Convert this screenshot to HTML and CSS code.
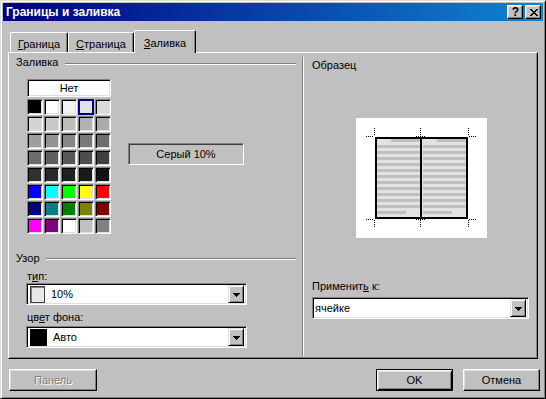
FILE: index.html
```html
<!DOCTYPE html>
<html lang="ru">
<head>
<meta charset="utf-8">
<title>Границы и заливка</title>
<link rel="stylesheet" href="styles.css">
</head>
<body>
<div class="window">
  <div class="titlebar">
    <span class="title">Границы и заливка</span>
    <div class="tb-buttons">
      <span class="tb-btn help">?</span>
      <span class="tb-btn close">
        <svg width="8" height="7" viewBox="0 0 8 7" shape-rendering="crispEdges">
          <path d="M0 0h2v1h-2zM6 0h2v1h-2zM1 1h2v1h-2zM5 1h2v1h-2zM2 2h4v1h-4zM3 3h2v1h-2zM2 4h4v1h-4zM1 5h2v1h-2zM5 5h2v1h-2zM0 6h2v1h-2zM6 6h2v1h-2z" fill="#000"/>
        </svg>
      </span>
    </div>
  </div>

  <div class="tabs">
    <div class="tab tab-1"><u>Г</u>раница</div>
    <div class="tab tab-2"><u>С</u>траница</div>
    <div class="tab tab-3 active"><u>З</u>аливка</div>
  </div>

  <div class="panel">
    <div class="col-left">
      <div class="group-head"><span>Заливка</span><span class="rule"></span></div>
      <div class="fill-row">
        <div class="palette">
          <div class="none-box">Нет</div>
          <div class="grid">
            <span class="cell" style="background:#000000"></span>
            <span class="cell" style="background:#ffffff"></span>
            <span class="cell" style="background:#f2f2f2"></span>
            <span class="cell selected" style="background:#e2e2e2"></span>
            <span class="cell" style="background:#dadada"></span>

            <span class="cell" style="background:#d2d6d2"></span>
            <span class="cell" style="background:#c8c8c8"></span>
            <span class="cell" style="background:#bdbdbd"></span>
            <span class="cell" style="background:#b2b2b2"></span>
            <span class="cell" style="background:#a8aca8"></span>

            <span class="cell" style="background:#9e9e9e"></span>
            <span class="cell" style="background:#909490"></span>
            <span class="cell" style="background:#868686"></span>
            <span class="cell" style="background:#7a7a7a"></span>
            <span class="cell" style="background:#6e6e6e"></span>

            <span class="cell" style="background:#6a6e6a"></span>
            <span class="cell" style="background:#5e5e5e"></span>
            <span class="cell" style="background:#565a56"></span>
            <span class="cell" style="background:#4c4e4c"></span>
            <span class="cell" style="background:#3e3e3e"></span>

            <span class="cell" style="background:#303030"></span>
            <span class="cell" style="background:#282a28"></span>
            <span class="cell" style="background:#202020"></span>
            <span class="cell" style="background:#181c18"></span>
            <span class="cell" style="background:#141018"></span>

            <span class="cell" style="background:#0000ff"></span>
            <span class="cell" style="background:#00ffff"></span>
            <span class="cell" style="background:#00ff00"></span>
            <span class="cell" style="background:#ffff00"></span>
            <span class="cell" style="background:#ff0000"></span>

            <span class="cell" style="background:#000080"></span>
            <span class="cell" style="background:#008080"></span>
            <span class="cell" style="background:#008000"></span>
            <span class="cell" style="background:#808000"></span>
            <span class="cell" style="background:#800000"></span>

            <span class="cell" style="background:#ff00ff"></span>
            <span class="cell" style="background:#800080"></span>
            <span class="cell" style="background:#ffffff"></span>
            <span class="cell" style="background:#c0c0c0"></span>
            <span class="cell" style="background:#808080"></span>
          </div>
        </div>
        <div class="fill-name">Серый 10%</div>
      </div>

      <div class="group-head pattern-head"><span>Узор</span><span class="rule"></span></div>
      <div class="label label-type">т<u>и</u>п:</div>
      <div class="combo combo-left">
        <span class="swatch swatch-light"></span>
        <span class="combo-text">10%</span>
        <span class="drop"><svg width="7" height="4" viewBox="0 0 7 4" shape-rendering="crispEdges"><path d="M0 0h7v1h-1v1h-1v1h-1v1h-1v-1h-1v-1h-1v-1h-1z" fill="#000"/></svg></span>
      </div>
      <div class="label label-bg">цв<u>е</u>т фона:</div>
      <div class="combo combo-left combo-bg">
        <span class="swatch swatch-black"></span>
        <span class="combo-text">Авто</span>
        <span class="drop"><svg width="7" height="4" viewBox="0 0 7 4" shape-rendering="crispEdges"><path d="M0 0h7v1h-1v1h-1v1h-1v1h-1v-1h-1v-1h-1v-1h-1z" fill="#000"/></svg></span>
      </div>
    </div>

    <div class="divider"></div>

    <div class="col-right">
      <div class="label sample-label">Образец</div>
      <div class="sample">
        <svg width="131" height="120" viewBox="0 0 131 120" shape-rendering="crispEdges">
          <rect x="0" y="0" width="131" height="120" fill="#fff"/>
          <rect x="19" y="19" width="93" height="82" fill="#e2e2e2"/>
          <g fill="#c0c0c0">
            <rect x="35" y="21" width="29" height="3"/>
            <rect x="21" y="27" width="43" height="3"/>
            <rect x="21" y="33" width="43" height="3"/>
            <rect x="21" y="39" width="43" height="3"/>
            <rect x="21" y="45" width="43" height="3"/>
            <rect x="21" y="51" width="43" height="3"/>
            <rect x="21" y="57" width="43" height="3"/>
            <rect x="21" y="63" width="43" height="3"/>
            <rect x="21" y="69" width="43" height="3"/>
            <rect x="21" y="75" width="43" height="3"/>
            <rect x="21" y="81" width="43" height="3"/>
            <rect x="21" y="87" width="43" height="3"/>
            <rect x="21" y="93" width="29" height="3"/>

            <rect x="81" y="21" width="29" height="3"/>
            <rect x="67" y="27" width="43" height="3"/>
            <rect x="67" y="33" width="43" height="3"/>
            <rect x="67" y="39" width="43" height="3"/>
            <rect x="67" y="45" width="43" height="3"/>
            <rect x="67" y="51" width="43" height="3"/>
            <rect x="67" y="57" width="43" height="3"/>
            <rect x="67" y="63" width="43" height="3"/>
            <rect x="67" y="69" width="43" height="3"/>
            <rect x="67" y="75" width="43" height="3"/>
            <rect x="67" y="81" width="43" height="3"/>
            <rect x="67" y="87" width="43" height="3"/>
            <rect x="67" y="93" width="29" height="3"/>
          </g>
          <g fill="#000">
            <rect x="19" y="19" width="93" height="2"/>
            <rect x="19" y="99" width="93" height="2"/>
            <rect x="19" y="19" width="2" height="82"/>
            <rect x="110" y="19" width="2" height="82"/>
            <rect x="64" y="19" width="2" height="82"/>
          </g>
          <g stroke="#000" stroke-width="1" stroke-dasharray="1 1" fill="none">
            <path d="M18.5 10V18M10 18.5H18"/>
            <path d="M64.5 10V18M60 18.5H69"/>
            <path d="M112.5 10V18M113 18.5H121"/>
            <path d="M18.5 102V110M10 101.5H18"/>
            <path d="M64.5 102V110M60 101.5H69"/>
            <path d="M112.5 102V110M113 101.5H121"/>
          </g>
        </svg>
      </div>
      <div class="label apply-label">Применит<u>ь</u> к:</div>
      <div class="combo combo-right">
        <span class="combo-text plain">ячейке</span>
        <span class="drop"><svg width="7" height="4" viewBox="0 0 7 4" shape-rendering="crispEdges"><path d="M0 0h7v1h-1v1h-1v1h-1v1h-1v-1h-1v-1h-1v-1h-1z" fill="#000"/></svg></span>
      </div>
    </div>
  </div>

  <div class="buttons">
    <div class="btn btn-panel disabled">Панель</div>
    <div class="spacer"></div>
    <div class="btn btn-ok default">OK</div>
    <div class="btn btn-cancel">Отмена</div>
  </div>
</div>
</body>
</html>
```

FILE: styles.css
```css
* { box-sizing: border-box; }

html, body {
  margin: 0;
  padding: 0;
  background: #c0c0c0;
}

body {
  font-family: "Liberation Sans", Arial, sans-serif;
  font-size: 11px;
  line-height: 13px;
  color: #000;
}

u { text-decoration: underline; text-underline-offset: 1px; }

.window {
  width: 546px;
  height: 399px;
  background: #c0c0c0;
  border: 1px solid;
  border-color: #dfdfdf #000 #000 #dfdfdf;
  box-shadow: inset 1px 1px #fff, inset -1px -1px #808080;
  padding: 2px;
  display: flex;
  flex-direction: column;
}

/* Title bar */
.titlebar {
  height: 18px;
  flex: none;
  background: linear-gradient(to right, #000080, #1084d0);
  display: flex;
  align-items: center;
  justify-content: space-between;
  padding: 0 2px 0 3px;
}

.title {
  color: #fff;
  font-weight: bold;
  font-size: 12px;
  line-height: 14px;
}

.tb-buttons {
  display: flex;
  gap: 2px;
}

.tb-btn {
  width: 16px;
  height: 14px;
  background: #c0c0c0;
  border: 1px solid;
  border-color: #fff #000 #000 #fff;
  box-shadow: inset -1px -1px #808080, inset 1px 1px #dfdfdf;
  display: flex;
  align-items: center;
  justify-content: center;
}

.help {
  font-weight: bold;
  font-size: 12px;
  line-height: 12px;
  padding-left: 1px;
}

.close svg { display: block; margin-left: 1px; }

/* Tabs */
.tabs {
  height: 22px;
  margin-top: 9px;
  padding-left: 7px;
  display: flex;
  align-items: flex-end;
  flex: none;
}

.tab {
  height: 20px;
  background: #c0c0c0;
  border-top: 1px solid #fff;
  border-left: 1px solid #fff;
  border-right: 1px solid #000;
  border-radius: 2px 2px 0 0;
  box-shadow: inset -1px 0 #808080;
  text-align: center;
  padding-top: 5px;
}

.tab-1 { width: 58px; }
.tab-2 { width: 66px; }
.tab-3 { width: 62px; }

.tab.active {
  height: 23px;
  margin-bottom: -1px;
  padding-top: 6px;
  position: relative;
  z-index: 1;
}

/* Panel */
.panel {
  width: 530px;
  height: 307px;
  margin-left: 5px;
  flex: none;
  border-top: 1px solid #fff;
  border-left: 1px solid #fff;
  border-right: 1px solid #000;
  border-bottom: 1px solid #000;
  box-shadow: inset -1px -1px #808080;
  display: flex;
}

.col-left {
  width: 293px;
  flex: none;
  padding: 3px 6px 0 7px;
  display: flex;
  flex-direction: column;
}

.group-head {
  display: flex;
  align-items: center;
  height: 13px;
}

.rule {
  flex: 1;
  height: 2px;
  border-top: 1px solid #808080;
  border-bottom: 1px solid #fff;
  margin-left: 7px;
  margin-top: 3px;
}

.pattern-head { margin-top: 18px; }
.pattern-head .rule { margin-left: 6px; margin-top: 0; }

.fill-row {
  display: flex;
  margin: 10px 0 0 11px;
}

.palette {
  width: 84px;
  display: flex;
  flex-direction: column;
}

.none-box {
  height: 18px;
  background: #fff;
  border: 1px solid;
  border-color: #808080 #fff #fff #808080;
  box-shadow: inset 1px 1px #000, inset -1px -1px #dfdfdf;
  text-align: center;
  line-height: 16px;
}

.grid {
  margin-top: 2px;
  display: grid;
  grid-template-columns: repeat(5, 16px);
  grid-auto-rows: 16px;
  gap: 1px;
}

.cell {
  display: block;
  border: 1px solid;
  border-color: #808080 #fff #fff #808080;
  box-shadow: inset 1px 1px #000, inset -1px -1px #dfdfdf;
}

.cell.selected {
  border: 2px solid #000080;
  box-shadow: none;
}

.fill-name {
  width: 116px;
  height: 22px;
  margin: 64px 0 0 17px;
  border: 1px solid;
  border-color: #808080 #fff #fff #808080;
  box-shadow: inset 1px 1px #404040;
  text-align: center;
  line-height: 20px;
}

.label { height: 13px; }

.label-type { margin: 5px 0 0 11px; }
.label-bg { margin: 6px 0 0 11px; }

.combo {
  height: 22px;
  background: #fff;
  border: 1px solid;
  border-color: #808080 #fff #fff #808080;
  box-shadow: inset 1px 1px #000, inset -1px -1px #dfdfdf;
  display: flex;
  align-items: center;
  padding: 2px;
}

.combo-left {
  width: 221px;
  margin-left: 10px;
}

.combo-bg { margin-top: 2px; }

.swatch {
  width: 16px;
  height: 17px;
  margin-left: 1px;
  flex: none;
}

.swatch-light {
  width: 15px;
  background: #e8e8e8;
  border: 1px solid #404040;
  box-shadow: inset 1px 1px #808080;
}

.swatch-black {
  width: 17px;
  background: #000;
}

.combo-text {
  margin-left: 6px;
  flex: 1;
}

.combo-text.plain { margin-left: 0; }

.drop {
  width: 16px;
  height: 18px;
  flex: none;
  background: #c0c0c0;
  border: 1px solid;
  border-color: #dfdfdf #000 #000 #dfdfdf;
  box-shadow: inset 1px 1px #fff, inset -1px -1px #808080;
  display: flex;
  align-items: center;
  justify-content: center;
}

.drop svg { display: block; margin-top: 1px; }

.divider {
  width: 2px;
  flex: none;
  margin: 4px 0 2px 0;
  border-left: 1px solid #808080;
  border-right: 1px solid #fff;
}

.col-right {
  flex: 1;
  padding: 6px 0 0 8px;
  display: flex;
  flex-direction: column;
}

.sample {
  width: 131px;
  height: 120px;
  margin: 46px 0 0 44px;
}

.sample svg { display: block; }

.apply-label { margin-top: 42px; }

.combo-right {
  width: 217px;
  margin-top: 4px;
}

/* Buttons */
.buttons {
  display: flex;
  margin-top: 10px;
  padding: 0 3px 0 6px;
  flex: none;
}

.spacer { flex: 1; }

.btn {
  height: 22px;
  background: #c0c0c0;
  border: 1px solid;
  border-color: #fff #000 #000 #fff;
  box-shadow: inset -1px -1px #808080, inset 1px 1px #dfdfdf;
  text-align: center;
  line-height: 20px;
}

.btn-panel { width: 88px; }
.btn-ok { width: 77px; }
.btn-cancel { width: 77px; margin-left: 10px; }

.btn.default {
  border-color: #000;
  box-shadow: inset 1px 1px #fff, inset -1px -1px #000, inset 2px 2px #dfdfdf, inset -2px -2px #808080;
}

.btn.disabled {
  color: #808080;
  text-shadow: 1px 1px #fff;
}
```
